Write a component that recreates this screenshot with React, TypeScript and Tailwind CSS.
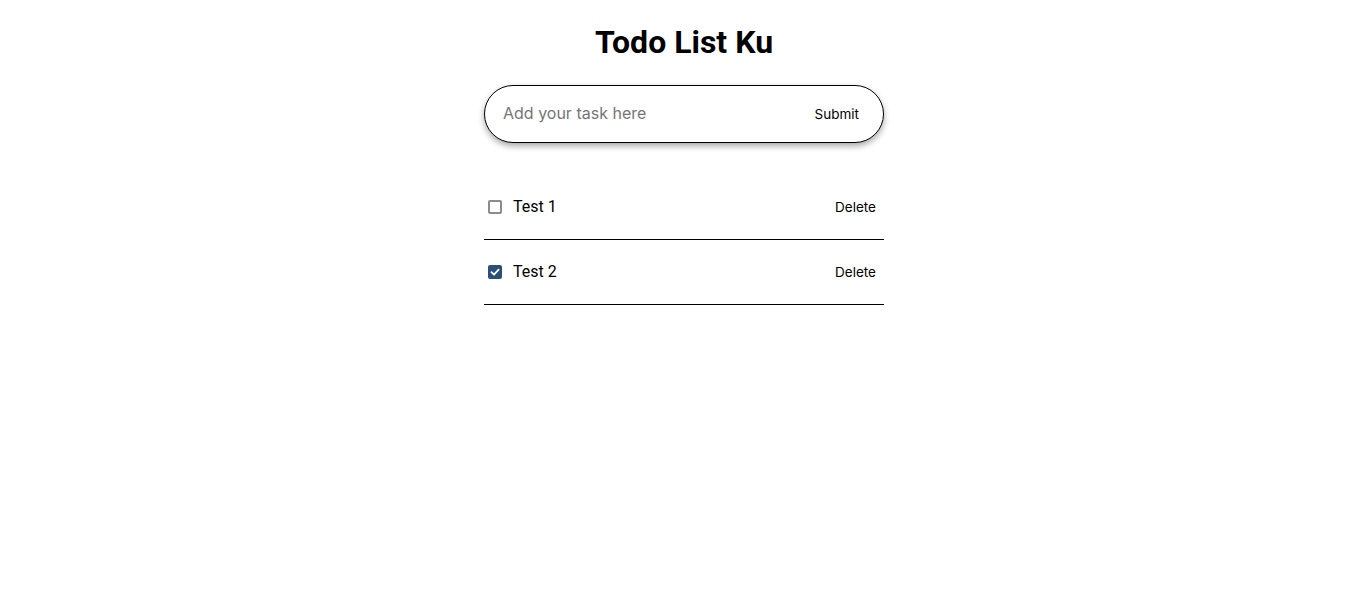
import React, { useState } from 'react';

type Todo = { id: number; text: string; done: boolean };

function Check({ checked, onChange }: { checked: boolean; onChange: () => void }) {
  return (
    <label className="relative w-[14px] h-[14px] ml-1 mr-[11px] shrink-0 cursor-pointer">
      <input
        type="checkbox"
        checked={checked}
        onChange={onChange}
        className="appearance-none block w-[14px] h-[14px] rounded-[2px] border-2 border-[#8b8a95] bg-white checked:bg-[#2b5078] checked:border-[#2b5078] cursor-pointer"
      />
      {checked && (
        <svg viewBox="0 0 14 14" className="absolute inset-0 w-[14px] h-[14px] pointer-events-none">
          <path d="M3.5 7.2 L6 9.6 L10.6 4.6" fill="none" stroke="white" strokeWidth="1.8" strokeLinecap="round" strokeLinejoin="round" />
        </svg>
      )}
    </label>
  );
}

export default function App() {
  const [task, setTask] = useState('');
  const [todos, setTodos] = useState<Todo[]>([
    { id: 1, text: 'Test 1', done: false },
    { id: 2, text: 'Test 2', done: true },
  ]);

  const addTodo = (e: React.FormEvent) => {
    e.preventDefault();
    if (!task.trim()) return;
    setTodos([...todos, { id: Date.now(), text: task, done: false }]);
    setTask('');
  };

  const toggle = (id: number) =>
    setTodos(todos.map((t) => (t.id === id ? { ...t, done: !t.done } : t)));

  const remove = (id: number) => setTodos(todos.filter((t) => t.id !== id));

  return (
    <div className="min-h-screen bg-white flex flex-col items-center pt-[23px]">
      <h1 className="font-['Roboto',sans-serif] font-bold text-[32px] leading-[38px] text-black mb-6">
        Todo List Ku
      </h1>

      {/* form */}
      <form
        onSubmit={addTodo}
        className="w-[400px] h-[58px] flex items-center border border-black rounded-full bg-white shadow-[0_3px_6px_rgba(0,0,0,0.35)] pl-[18px] pr-6"
      >
        <input
          value={task}
          onChange={(e) => setTask(e.target.value)}
          placeholder="Add your task here"
          className="flex-1 outline-none bg-transparent font-['Inter',sans-serif] text-base leading-5 text-black placeholder:text-[#757575] -mt-0.5"
        />
        <button type="submit" className="font-['Inter',sans-serif] text-[13.5px] text-black mt-px">
          Submit
        </button>
      </form>

      {/* list */}
      <ul className="w-[400px] mt-8">
        {todos.map((t) => (
          <li key={t.id} className="h-[65px] flex items-center border-b border-black">
            <Check checked={t.done} onChange={() => toggle(t.id)} />
            <span className="flex-1 font-['Roboto',sans-serif] text-base text-black">{t.text}</span>
            <button
              onClick={() => remove(t.id)}
              className="font-['Inter',sans-serif] text-[13.5px] text-black pr-2 mt-px"
            >
              Delete
            </button>
          </li>
        ))}
      </ul>
    </div>
  );
}
